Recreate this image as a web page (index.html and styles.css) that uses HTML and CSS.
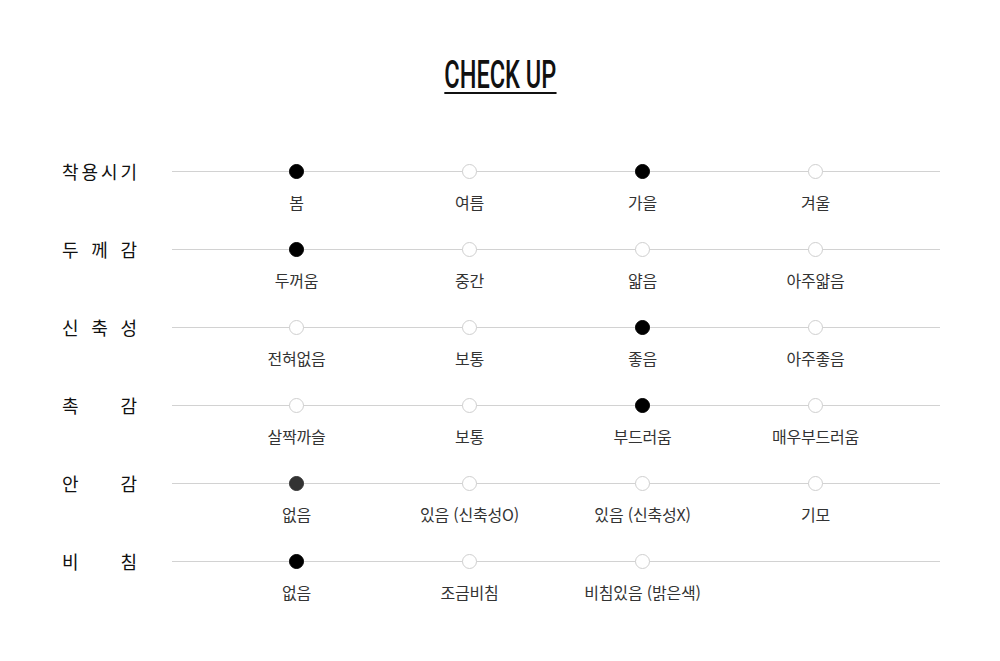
FILE: index.html
```html
<!DOCTYPE html>
<html lang="ko">
<head>
<meta charset="utf-8">
<link rel="stylesheet" href="styles.css">
</head>
<body>
<div class="page">
  <div class="head"><h1 class="title">CHECK UP</h1></div>
  <div class="rows">
    <div class="row">
      <div class="label"><span>착</span><span>용</span><span>시</span><span>기</span></div>
      <div class="track">
        <div class="opt"><i class="dot on"></i><span>봄</span></div>
        <div class="opt"><i class="dot"></i><span>여름</span></div>
        <div class="opt"><i class="dot on"></i><span>가을</span></div>
        <div class="opt"><i class="dot"></i><span>겨울</span></div>
      </div>
    </div>
    <div class="row">
      <div class="label"><span>두</span><span>께</span><span>감</span></div>
      <div class="track">
        <div class="opt"><i class="dot on"></i><span>두꺼움</span></div>
        <div class="opt"><i class="dot"></i><span>중간</span></div>
        <div class="opt"><i class="dot"></i><span>얇음</span></div>
        <div class="opt"><i class="dot"></i><span>아주얇음</span></div>
      </div>
    </div>
    <div class="row">
      <div class="label"><span>신</span><span>축</span><span>성</span></div>
      <div class="track">
        <div class="opt"><i class="dot"></i><span>전혀없음</span></div>
        <div class="opt"><i class="dot"></i><span>보통</span></div>
        <div class="opt"><i class="dot on"></i><span>좋음</span></div>
        <div class="opt"><i class="dot"></i><span>아주좋음</span></div>
      </div>
    </div>
    <div class="row">
      <div class="label"><span>촉</span><span>감</span></div>
      <div class="track">
        <div class="opt"><i class="dot"></i><span>살짝까슬</span></div>
        <div class="opt"><i class="dot"></i><span>보통</span></div>
        <div class="opt"><i class="dot on"></i><span>부드러움</span></div>
        <div class="opt"><i class="dot"></i><span>매우부드러움</span></div>
      </div>
    </div>
    <div class="row">
      <div class="label"><span>안</span><span>감</span></div>
      <div class="track">
        <div class="opt"><i class="dot gray"></i><span>없음</span></div>
        <div class="opt"><i class="dot"></i><span>있음 (신축성O)</span></div>
        <div class="opt"><i class="dot"></i><span>있음 (신축성X)</span></div>
        <div class="opt"><i class="dot"></i><span>기모</span></div>
      </div>
    </div>
    <div class="row">
      <div class="label"><span>비</span><span>침</span></div>
      <div class="track">
        <div class="opt"><i class="dot on"></i><span>없음</span></div>
        <div class="opt"><i class="dot"></i><span>조금비침</span></div>
        <div class="opt"><i class="dot"></i><span>비침있음 (밝은색)</span></div>
      </div>
    </div>
  </div>
</div>
</body>
</html>
```

FILE: styles.css
```css
html, body {
  margin: 0;
  padding: 0;
  background: #fff;
}
.page {
  width: 1000px;
  height: 661px;
  font-family: "Noto Sans CJK KR", "Noto Sans", sans-serif;
  color: #222;
}
.head {
  display: flex;
  justify-content: center;
  padding-top: 58px;
}
.title {
  margin: 0;
  font-family: Roboto, "Liberation Sans", sans-serif;
  font-weight: 500;
  font-size: 38px;
  line-height: 34px;
  color: #111;
  border-bottom: 2px solid #111;
  transform: scaleX(0.62);
}
.rows {
  display: flex;
  flex-direction: column;
  gap: 41px;
  padding-left: 62px;
  margin-top: 70px;
}
.row {
  display: flex;
  align-items: flex-start;
  gap: 35px;
  height: 37px;
}
.label {
  width: 75px;
  height: 15px;
  line-height: 15px;
  font-size: 18px;
  color: #111;
  display: flex;
  justify-content: space-between;
}
.track {
  width: 768px;
  display: grid;
  grid-template-columns: repeat(4, 173px);
  padding-left: 38px;
  box-sizing: border-box;
  background: linear-gradient(#d2d2d2, #d2d2d2) no-repeat 0 7px / 100% 1px;
}
.opt {
  display: flex;
  flex-direction: column;
  align-items: center;
}
.opt span {
  margin-top: 13px;
  font-size: 16px;
  line-height: 20px;
  color: #333;
  white-space: nowrap;
  letter-spacing: -0.2px;
}
.dot {
  display: block;
  width: 15px;
  height: 15px;
  box-sizing: border-box;
  border-radius: 50%;
  background: #fff;
  border: 1px solid #cfcfcf;
}
.dot.on {
  background: #000;
  border-color: #000;
}
.dot.gray {
  background: #333;
  border-color: #333;
}
```
